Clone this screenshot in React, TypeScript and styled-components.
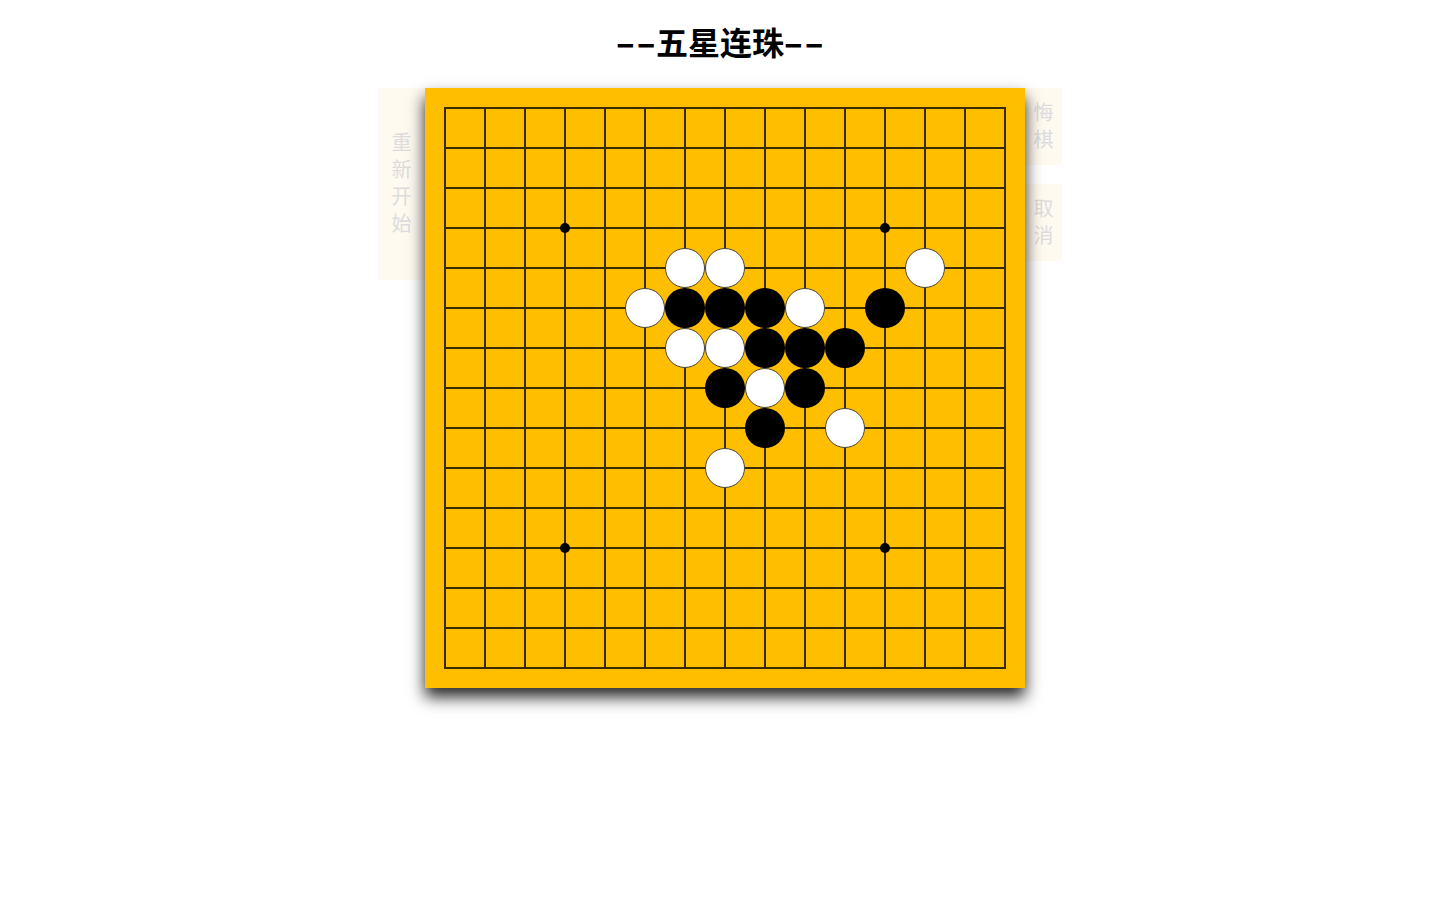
import React from "react";
import styled, { createGlobalStyle } from "styled-components";

const GlobalStyle = createGlobalStyle`
  html, body {
    margin: 0;
    padding: 0;
    background: #ffffff;
    font-family: "Noto Sans CJK SC", "Noto Sans", sans-serif;
  }
`;

const Page = styled.div`
  width: 1440px;
  min-height: 900px;
  display: flex;
  flex-direction: column;
  align-items: center;
`;

const Title = styled.h1`
  margin: 0;
  box-sizing: border-box;
  height: 88px;
  line-height: 82px;
  padding-bottom: 6px;
  font-size: 32px;
  font-weight: 700;
  color: #000;
  font-family: "Noto Sans CJK SC", sans-serif;
  white-space: nowrap;
`;

const Dash = styled.span`
  display: inline-block;
  transform: scaleX(1.75);
  transform-origin: center;
  margin: 0 8px;
`;

const Row = styled.div`
  display: flex;
  flex-direction: row;
  align-items: flex-start;
`;

const SideColumn = styled.div`
  display: flex;
  flex-direction: column;
  gap: 19px;
`;

const SideButton = styled.div<{ $w: number; $h: number }>`
  box-sizing: border-box;
  width: ${(p) => p.$w}px;
  height: ${(p) => p.$h}px;
  padding-bottom: 4px;
  background: #fffaf0;
  color: #dcdcdc;
  font-size: 20px;
  line-height: 27px;
  display: flex;
  align-items: center;
  justify-content: center;
  cursor: pointer;
  user-select: none;
`;

const ButtonText = styled.span`
  width: 20px;
  text-align: center;
  word-break: break-all;
`;

const Board = styled.div`
  position: relative;
  z-index: 1;
  width: 600px;
  height: 600px;
  background: #ffbf00;
  box-shadow: 0 9px 15px rgba(0, 0, 0, 0.85);
`;

const N = 15;
const CELL = 40;
const OFF = 20;
const LINE = "#3a2b02";

type Stone = [number, number, "w" | "b"];

const stones: Stone[] = [
  [6, 4, "w"],
  [7, 4, "w"],
  [12, 4, "w"],
  [5, 5, "w"],
  [9, 5, "w"],
  [6, 6, "w"],
  [7, 6, "w"],
  [8, 7, "w"],
  [10, 8, "w"],
  [7, 9, "w"],
  [6, 5, "b"],
  [7, 5, "b"],
  [8, 5, "b"],
  [11, 5, "b"],
  [8, 6, "b"],
  [9, 6, "b"],
  [10, 6, "b"],
  [7, 7, "b"],
  [9, 7, "b"],
  [8, 8, "b"],
];

const stars = [
  [3, 3],
  [11, 3],
  [3, 11],
  [11, 11],
];

function BoardDrawing() {
  const lines = [];
  for (let i = 0; i < N; i++) {
    const p = OFF + i * CELL;
    lines.push(
      <line key={"h" + i} x1={OFF - 1} y1={p} x2={OFF + (N - 1) * CELL + 1} y2={p} stroke={LINE} strokeWidth={2} />
    );
    lines.push(
      <line key={"v" + i} x1={p} y1={OFF - 1} x2={p} y2={OFF + (N - 1) * CELL + 1} stroke={LINE} strokeWidth={2} />
    );
  }
  return (
    <svg width={600} height={600} viewBox="0 0 600 600" style={{ display: "block" }}>
      {lines}
      {stars.map(([c, r]) => (
        <circle key={`s${c}-${r}`} cx={OFF + c * CELL} cy={OFF + r * CELL} r={5} fill="#000" />
      ))}
      {stones.map(([c, r, t]) => (
        <circle
          key={`${c}-${r}`}
          cx={OFF + c * CELL}
          cy={OFF + r * CELL}
          r={t === "w" ? 19.5 : 20}
          fill={t === "w" ? "#ffffff" : "#000000"}
          stroke={t === "w" ? "#444" : "none"}
          strokeWidth={t === "w" ? 1 : 0}
        />
      ))}
    </svg>
  );
}

export default function App() {
  return (
    <>
      <GlobalStyle />
      <Page>
        <Title>
          <Dash>--</Dash>五星连珠<Dash>--</Dash>
        </Title>
        <Row>
          <SideColumn>
            <SideButton $w={47} $h={192}>
              <ButtonText>重新开始</ButtonText>
            </SideButton>
          </SideColumn>
          <Board>
            <BoardDrawing />
          </Board>
          <SideColumn>
            <SideButton $w={37} $h={77}>
              <ButtonText>悔棋</ButtonText>
            </SideButton>
            <SideButton $w={37} $h={77}>
              <ButtonText>取消</ButtonText>
            </SideButton>
          </SideColumn>
        </Row>
      </Page>
    </>
  );
}
